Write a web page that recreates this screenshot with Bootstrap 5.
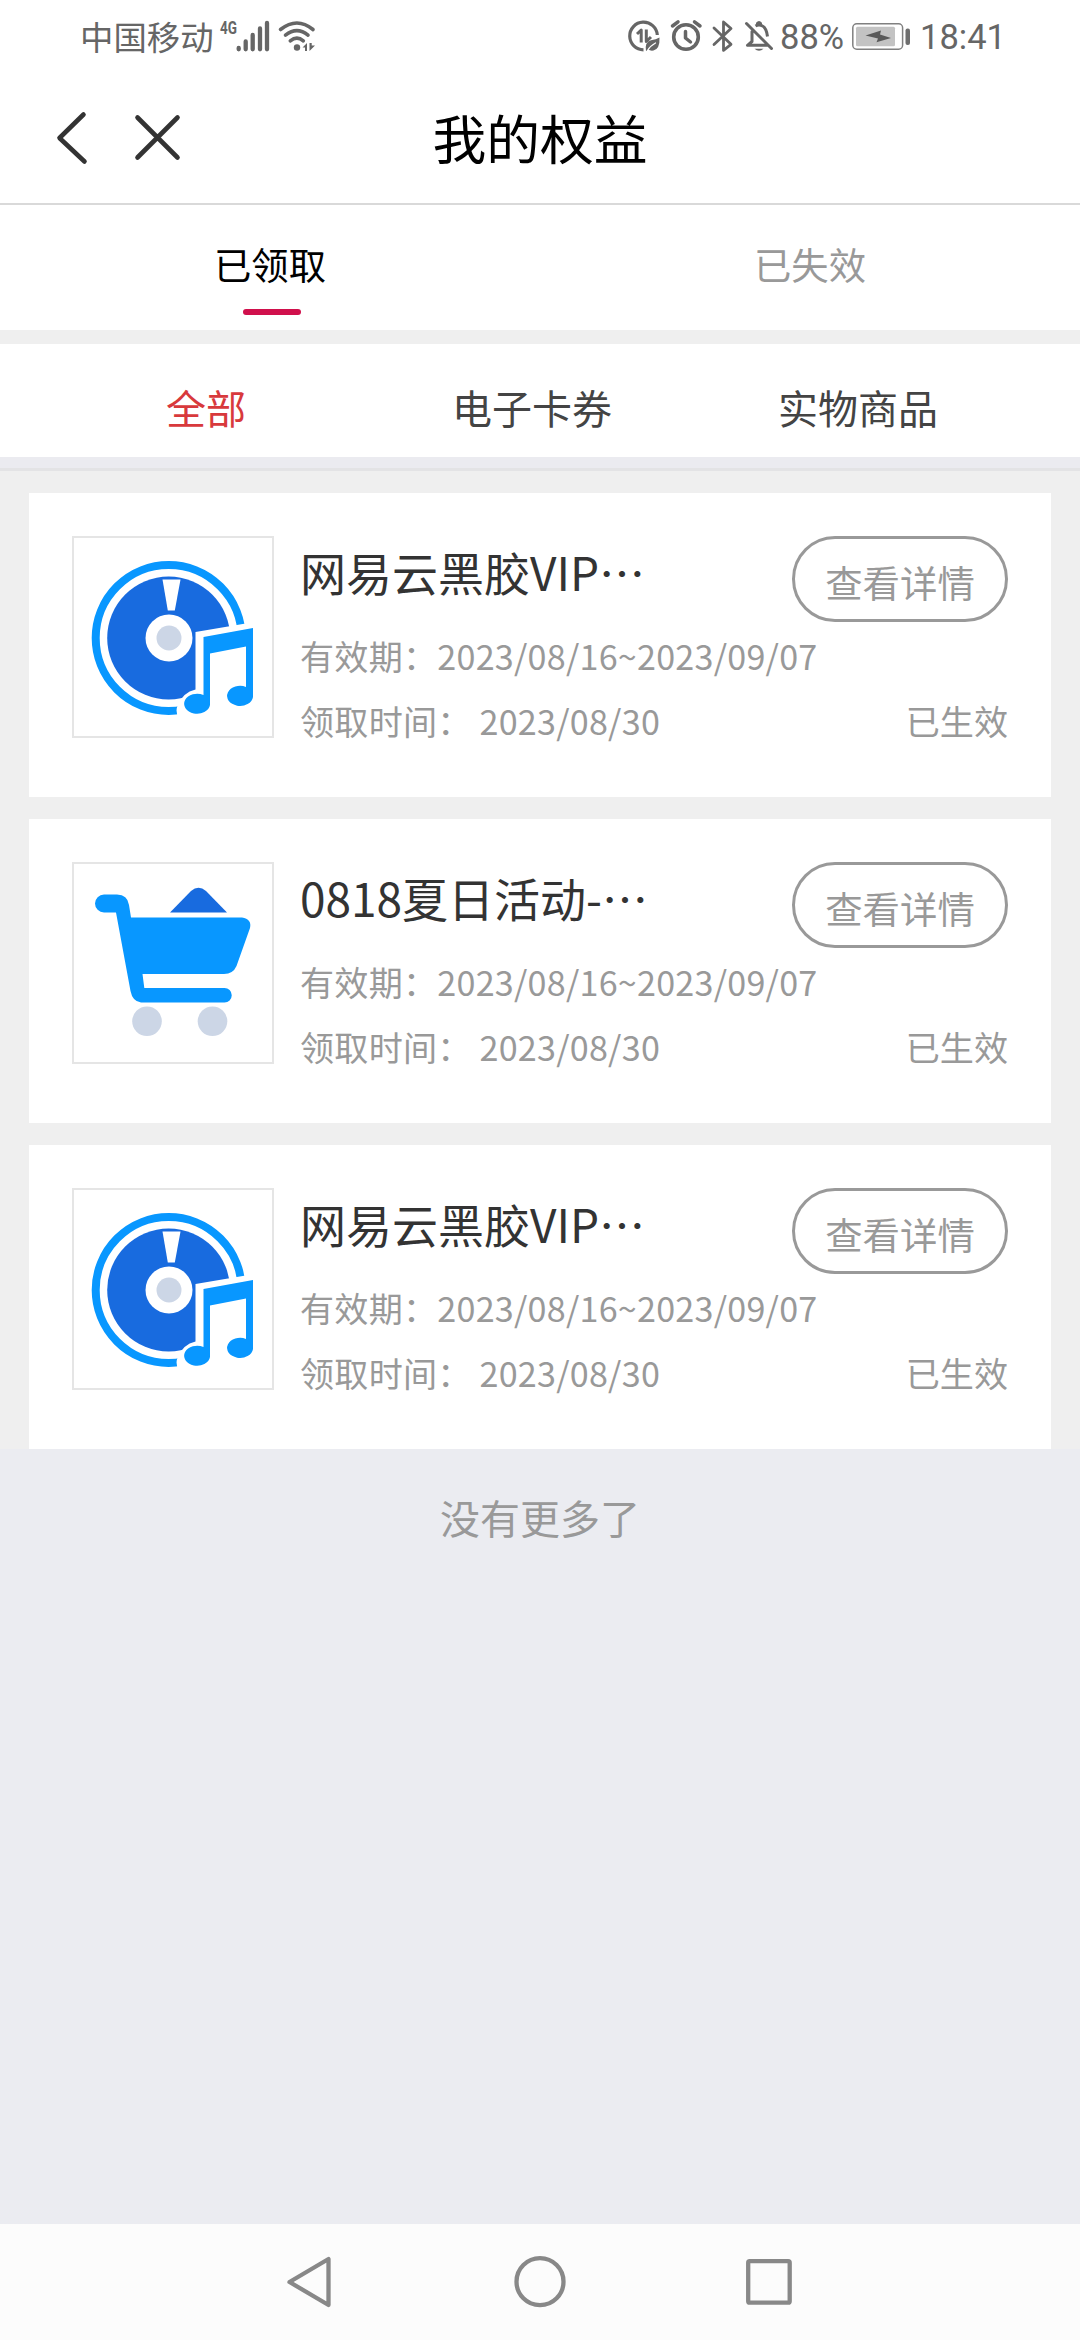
<!DOCTYPE html>
<html lang="zh-CN">
<head>
<meta charset="utf-8">
<meta name="viewport" content="width=device-width, initial-scale=1">
<title>我的权益</title>
<link href="https://cdn.jsdelivr.net/npm/bootstrap@5.3.0/dist/css/bootstrap.min.css" rel="stylesheet">
<style>
  body { font-family: "Noto Sans CJK SC", sans-serif; background: #ebecf1; color: #333; height: 2340px; overflow: hidden; }
  svg { display: block; flex: none; }
  .status-bar { height: 80px; padding: 0 74px 8px 80px; color: #666; font-size: 33.4px; line-height: 72px; }
  .status-bar .latin { font-family: Roboto, sans-serif; font-size: 34.5px; padding-top: 1px; white-space: nowrap; }
  .carrier { width: 138px; white-space: nowrap; }
  .pct { width: 69px; }
  .title-bar { height: 125px; border-bottom: 2px solid #d9d9d9; color: #000; }
  .title-bar h1 { font-size: 53.8px; font-weight: 400; line-height: 114px; }
  .title-side { width: 200px; }
  .state-tabs { height: 125px; font-size: 37.3px; line-height: 50px; color: #999; padding-top: 34px; }
  .state-tabs .current { color: #000; }
  .state-tabs .current::after { content: ""; display: block; width: 58px; height: 6px; border-radius: 3px; background: #d0104c; margin: 20px auto 0; transform: translateX(2px); }
  .kinds { height: 113px; margin-top: 14px; padding: 0 59px 0 43px; font-size: 40px; line-height: 126px; color: #444; }
  .kinds .current { color: #d8393c; }
  .strip { background: #efefef; }
  .divider { height: 14px; background: #ebebf0; border-bottom: 3px solid #e3e3e5; }
  .benefits { background: #efefef; padding: 22px 29px 0; }
  .benefit { height: 304px; padding: 43px; }
  .benefit + .benefit { margin-top: 22px; }
  .thumb { width: 202px; height: 202px; border: 2px solid #e5e5e5; }
  .info { margin-left: 26px; }
  .name { font-size: 46px; line-height: 70px; height: 87px; white-space: nowrap; }
  .detail { width: 216px; height: 86px; border: 3px solid #999; color: #999; font-size: 37.4px; line-height: 87px; padding: 0; }
  .line { font-size: 34.1px; line-height: 65px; color: #999; white-space: pre; }
  .line .stamp { letter-spacing: .25px; }
  .end-note { font-size: 40px; line-height: 60px; color: #999; padding-top: 38px; }
  .nav-keys { height: 116px; background: #fcfcfc; }
</style>
</head>
<body class="d-flex flex-column">
<svg width="0" height="0" class="position-absolute">
  <symbol id="disc" viewBox="74 538 198 198">
    <circle cx="168.7" cy="638" r="73" fill="none" stroke="#0897ff" stroke-width="8"/>
    <circle cx="168.7" cy="638" r="61.5" fill="#186bdf"/>
    <path d="M162.5 579.5h18l-5.7 31h-7z" fill="#fff"/>
    <circle cx="169" cy="638" r="23.5" fill="#fff"/>
    <circle cx="169" cy="638" r="12.5" fill="#ccd6e6"/>
    <path d="M195.500 632L260 621V720H179Q175 711 177.500 706Q183 692 195.500 689.500Z" fill="#fff"/>
    <path d="M203.500 637L253 628V697A13 10 0 1 1 246 687V646.500L210 653.500V705A13 10 0 1 1 203.500 695Z" fill="#0897ff"/>
  </symbol>
  <symbol id="cart" viewBox="74 864 198 198">
    <path d="M170 912.500L191 891Q198.500 884.500 206 891L227 912.500Z" fill="#186bdf"/>
    <path d="M104 894.500H117Q127.500 894.500 129 905L131 917.500H242Q252 919 250 928L236.500 966Q233 974 224 974H142.500L144.300 988H224.500A7.200 7.200 0 0 1 224.500 1002.500H141Q132.500 1001.500 130.500 991L116 912.500H104A9 9 0 0 1 104 894.500Z" fill="#0897ff"/>
    <circle cx="147" cy="1021.300" r="14.800" fill="#ccd6e6"/>
    <circle cx="212.500" cy="1021.300" r="14.800" fill="#ccd6e6"/>
  </symbol>
</svg>

<div class="status-bar bg-white d-flex">
  <span class="carrier">中国移动</span>
  <svg width="102" height="72" viewBox="218 0 102 72" fill="none" stroke="#666" stroke-linecap="round">
    <text x="220" y="34" font-family="Roboto" font-weight="700" font-size="19" textLength="17" lengthAdjust="spacingAndGlyphs" fill="#666" stroke="none">4G</text>
    <path stroke-width="4.300" d="M238.700 48v1.300M245.700 41.500v7.800M252.700 35v14.300M260 28.500v20.800M267 23v26.300"/>
    <path stroke-width="3.600" d="M280.500 29.500Q297 16.500 313 29.500M285.500 35.200Q297 26 308 35.200M290.300 40.800Q297 35.300 303.300 40.800"/>
    <circle cx="297" cy="47.500" r="3.200" fill="#666" stroke="none"/>
    <path d="M302.500 47.500L307 43v8h-2v-3.500zM309.500 43v8l5.500-5.500h-3.300v-2.500z" fill="#666" stroke="none"/>
  </svg>
  <svg class="ms-auto" width="155" height="72" viewBox="625 0 155 72" fill="none" stroke="#666" stroke-linecap="round" stroke-linejoin="round">
    <path stroke-width="3.200" stroke-linecap="butt" d="M643.500 49.800A13.800 13.800 0 1 1 657.300 35"/>
    <path stroke-width="3" stroke-linecap="butt" d="M641.200 42.500V30L637 34M646.300 29.500V41.500L651 37"/>
    <path fill="#666" stroke="none" d="M646 51Q644.500 42 651 40.300Q656 39.500 659.500 37.500Q660 49 653.500 50.500Q650 51 648.500 49.500Z"/>
    <path stroke="#fff" stroke-width="1.200" d="M647.500 50.500Q650 46 655.500 43"/>
    <circle cx="686" cy="37" r="12.300" stroke-width="3.600"/>
    <path stroke-width="3.500" d="M685.500 31.500v6.500l5 4M672.500 26l5.500-4.200M694.500 21.800l5.500 4.200"/>
    <path stroke-width="2.800" d="M714 28l17 16.300-7.500 6V22l7.500 6.500L714 44.500"/>
    <path stroke-width="3" d="M746.500 23.500l25 25M752 31.500v10l-4.500 3.800h20"/>
    <path stroke-width="3" stroke-linecap="butt" d="M755.500 26Q759 24 762.500 26Q766.500 28 767.500 36.500"/>
    <path stroke-width="3" d="M757.500 24.500v-1q1.500-2 3 0v1"/>
    <path fill="#666" stroke="none" d="M754.500 48.800h9q-4.500 4-9 0z"/>
  </svg>
  <span class="latin pct">88%</span>
  <svg width="71" height="72" viewBox="849 0 71 72">
    <rect x="852.800" y="23.800" width="49.800" height="25.400" rx="4" fill="none" stroke="#808080" stroke-width="1.500"/>
    <rect x="856" y="26.800" width="39" height="19.500" rx="1.500" fill="#c3c3c3"/>
    <path d="M865.500 35.500L881 30.500 880 34.500 891 38 876.500 42.300 878 38.500Z" fill="#595959"/>
    <rect x="905.500" y="28.500" width="4.500" height="16.500" rx="2" fill="#6e6e6e"/>
  </svg>
  <span class="latin">18:41</span>
</div>

<header class="title-bar bg-white d-flex justify-content-between">
  <div class="title-side">
    <svg width="200" height="120" viewBox="0 80 200 120" fill="none" stroke="#333" stroke-width="4.600" stroke-linecap="round" stroke-linejoin="round">
      <path d="M83.500 114.500L59.500 138l25 23.500M137.500 117.500l40 40M177.500 117.500l-40 40"/>
    </svg>
  </div>
  <h1 class="m-0">我的权益</h1>
  <div class="title-side"></div>
</header>

<div class="strip">
  <nav class="state-tabs bg-white row g-0 text-center m-0">
    <div class="col current">已领取</div>
    <div class="col">已失效</div>
  </nav>
  <nav class="kinds bg-white row g-0 text-center mx-0">
    <div class="col current">全部</div>
    <div class="col">电子卡券</div>
    <div class="col">实物商品</div>
  </nav>
</div>
<div class="divider"></div>

<main class="benefits">
  <article class="benefit bg-white d-flex">
    <div class="thumb flex-shrink-0"><svg width="198" height="198"><use href="#disc"/></svg></div>
    <div class="info flex-grow-1">
      <div class="d-flex justify-content-between"><div class="name">网易云黑胶VIP…</div><button class="detail btn rounded-pill">查看详情</button></div>
      <div class="line"><span class="stamp">有效期：2023/08/16~2023/09/07</span></div>
      <div class="line d-flex justify-content-between"><span class="stamp">领取时间： 2023/08/30</span><span>已生效</span></div>
    </div>
  </article>
  <article class="benefit bg-white d-flex">
    <div class="thumb flex-shrink-0"><svg width="198" height="198"><use href="#cart"/></svg></div>
    <div class="info flex-grow-1">
      <div class="d-flex justify-content-between"><div class="name">0818夏日活动-…</div><button class="detail btn rounded-pill">查看详情</button></div>
      <div class="line"><span class="stamp">有效期：2023/08/16~2023/09/07</span></div>
      <div class="line d-flex justify-content-between"><span class="stamp">领取时间： 2023/08/30</span><span>已生效</span></div>
    </div>
  </article>
  <article class="benefit bg-white d-flex">
    <div class="thumb flex-shrink-0"><svg width="198" height="198"><use href="#disc"/></svg></div>
    <div class="info flex-grow-1">
      <div class="d-flex justify-content-between"><div class="name">网易云黑胶VIP…</div><button class="detail btn rounded-pill">查看详情</button></div>
      <div class="line"><span class="stamp">有效期：2023/08/16~2023/09/07</span></div>
      <div class="line d-flex justify-content-between"><span class="stamp">领取时间： 2023/08/30</span><span>已生效</span></div>
    </div>
  </article>
</main>
<div class="end-note text-center">没有更多了</div>

<footer class="nav-keys mt-auto d-flex justify-content-center">
  <svg width="520" height="116" viewBox="280 2224 520 116" fill="none" stroke="#888" stroke-width="4.300" stroke-linejoin="round">
    <path d="M328.500 2259v46L289.500 2282Z"/>
    <circle cx="540" cy="2281.700" r="23.500"/>
    <rect x="748.200" y="2261.200" width="41.500" height="41.500" rx="1.500"/>
  </svg>
</footer>
<script src="https://cdn.jsdelivr.net/npm/bootstrap@5.3.0/dist/js/bootstrap.bundle.min.js"></script>
</body>
</html>
